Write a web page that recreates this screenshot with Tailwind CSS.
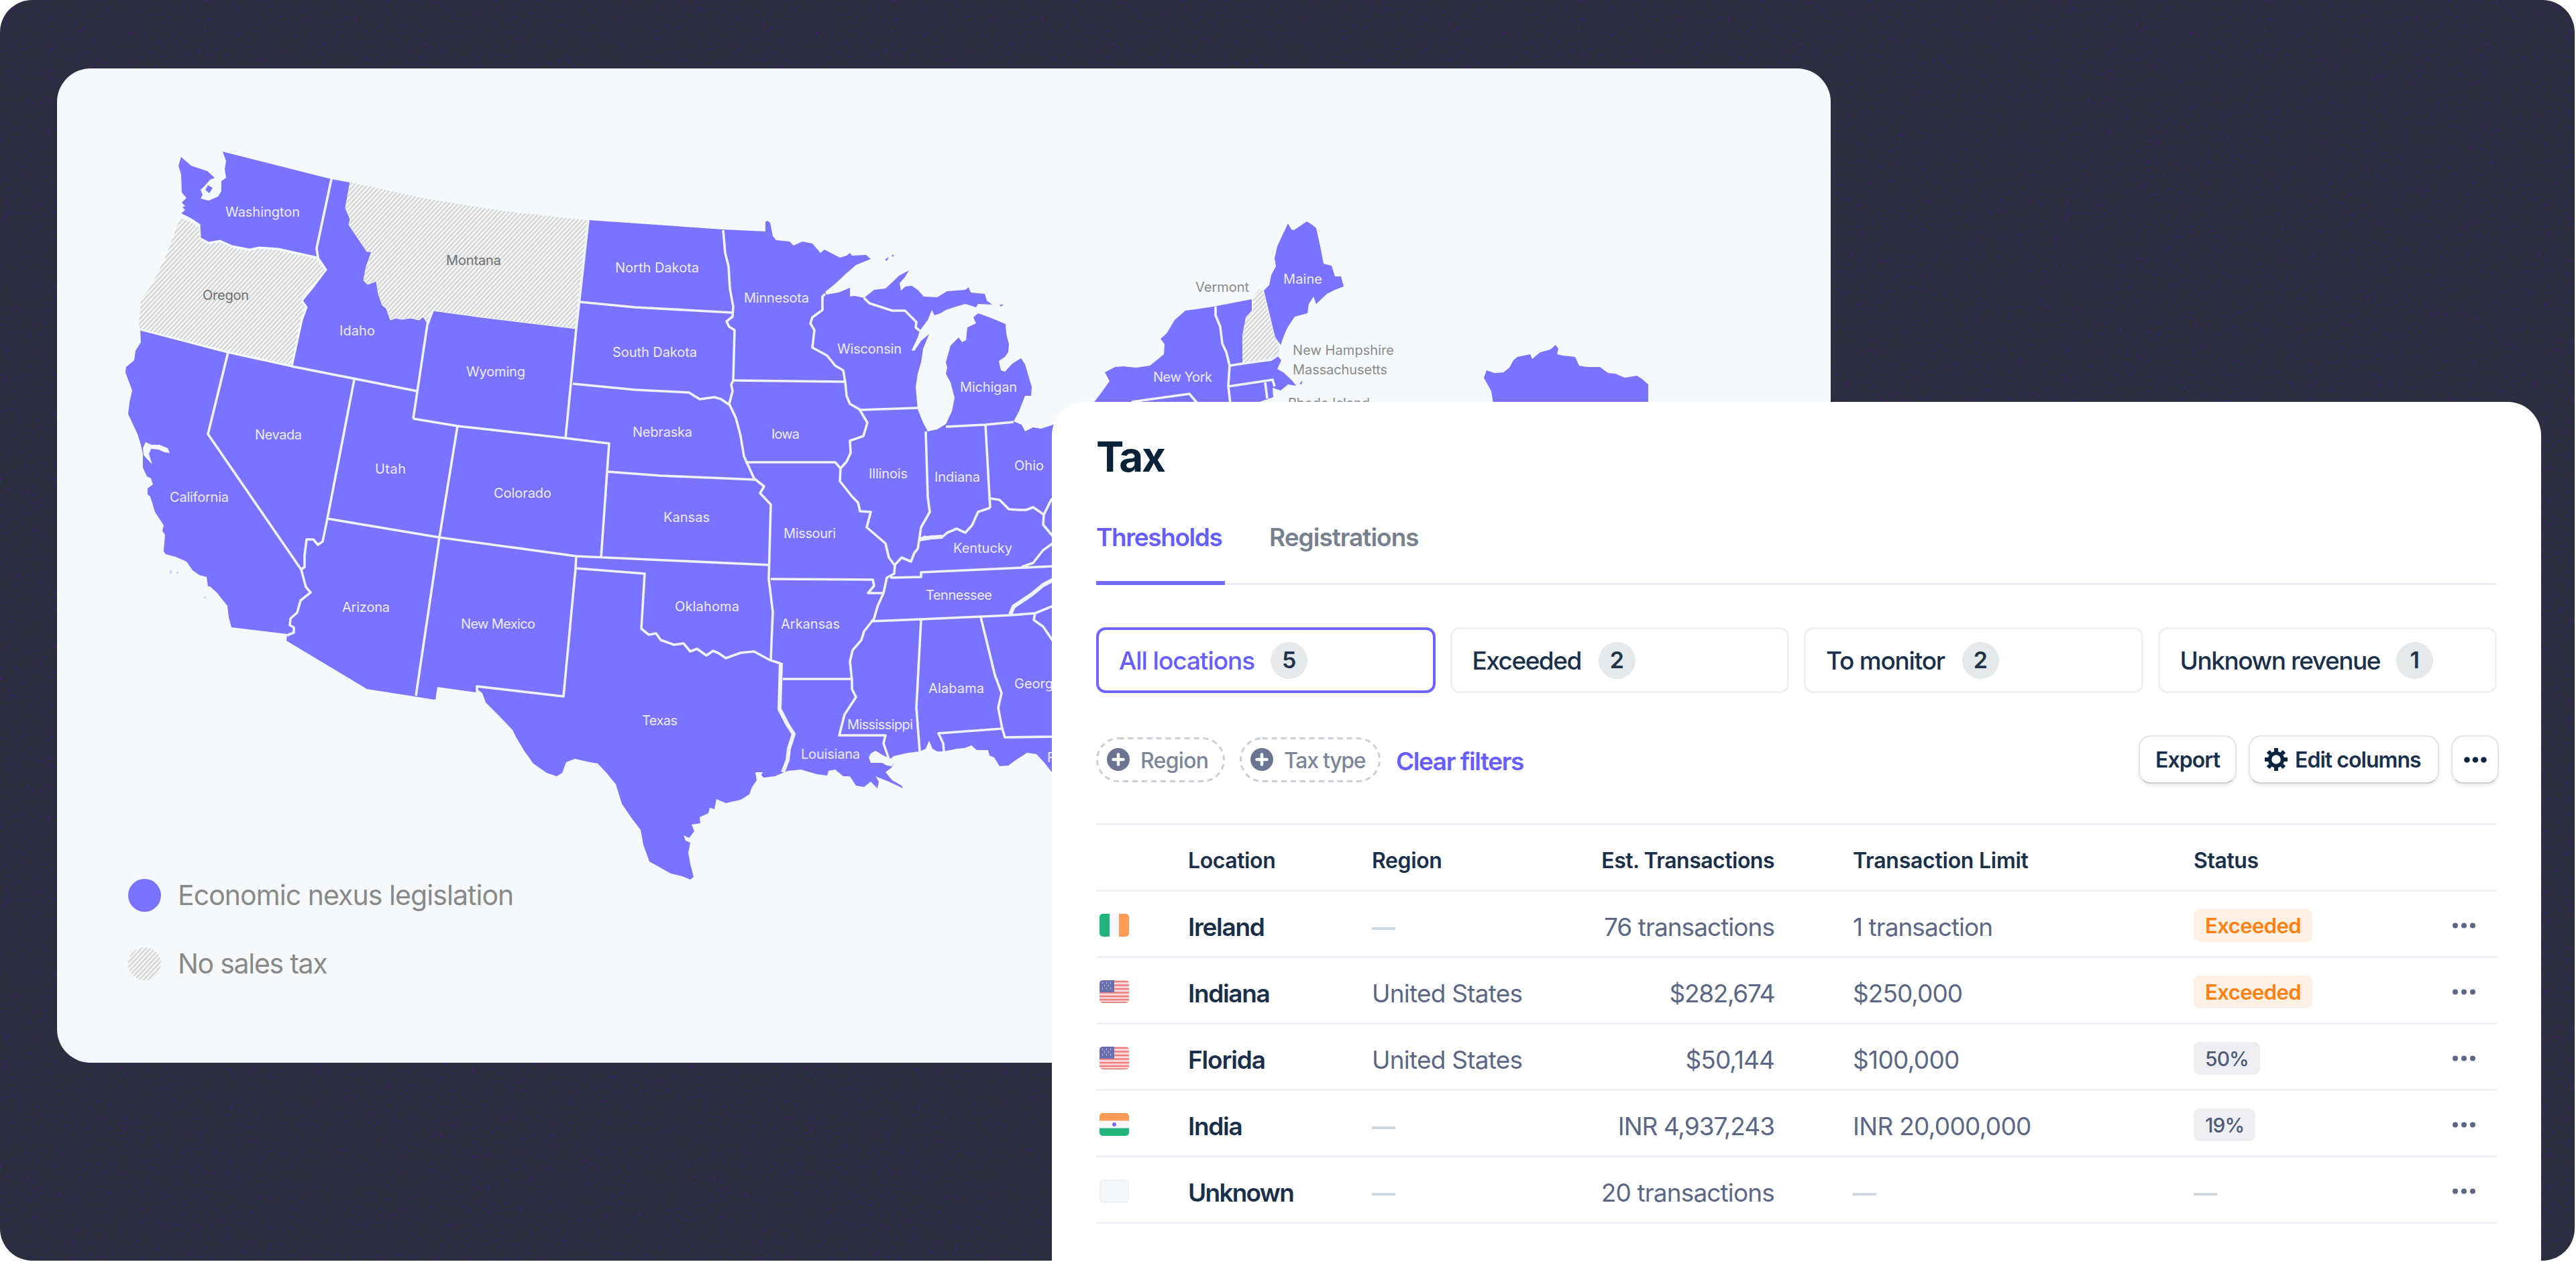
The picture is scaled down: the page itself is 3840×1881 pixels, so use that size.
<!DOCTYPE html>
<html lang="en">
<head>
    <meta charset="UTF-8">
    <meta name="viewport" content="width=device-width, initial-scale=1.0">
    <script src="https://cdn.jsdelivr.net/npm/@tailwindcss/browser@4"></script>
    <title>Tax thresholds</title>
</head>
<body class="bg-white font-['Inter',sans-serif]">

<div class="grid w-[3838px] h-[1879px] rounded-[48px] overflow-hidden bg-[#2a2e3e]">

  <!-- speckled background -->
  <svg class="col-start-1 row-start-1" width="3838" height="1879">
    <filter id="specks" x="0" y="0" width="100%" height="100%" color-interpolation-filters="sRGB">
      <feTurbulence type="fractalNoise" baseFrequency="0.25" numOctaves="2" seed="4"/>
      <feColorMatrix values="0 0 0 0 0.27  0 0 0 0 0.12  0 0 0 0 0.50  8 0 0 0 -5.1"/>
    </filter>
    <rect width="3838" height="1879" filter="url(#specks)" opacity="0.8"/>
  </svg>

  <!-- map card -->
  <div class="col-start-1 row-start-1 grid w-[2644px] h-[1482px] mt-[102px] ml-[85px] rounded-[50px] bg-[#f5f9fc] overflow-hidden relative">
    <svg class="col-start-1 row-start-1" width="2644" height="1482" viewBox="85 102 2644 1482">
      <defs>
        <pattern id="hatch" width="4.9" height="4.9" patternUnits="userSpaceOnUse" patternTransform="rotate(43)">
          <rect width="4.9" height="4.9" fill="#f2f4f5"/>
          <rect width="2" height="4.9" fill="#d2d3d3"/>
        </pattern>
      </defs>

      <!-- west, plains and south -->
      <path fill="#7a73ff" d="M332 226L494 267L522 272L524 330L560 385L700 410L855 410L877 328L1078 342L1141 345L1141 331L1144 329L1148 332L1152 352L1157 358L1177 360L1183 366L1196 360L1211 363L1223 377L1229 372L1252 384L1262 381L1267 377L1270 381L1291 380L1298 386L1276 395L1262 407L1245 423L1230 435L1232 439L1250 436L1267 429L1267 442L1274 441L1288 444L1303 432L1320 430L1333 418L1340 411L1355 403L1349 413L1341 422L1343 433L1350 427L1359 426L1368 432L1377 442L1397 443L1412 434L1439 432L1444 428L1447 436L1468 438L1471 448L1479 454L1458 453L1455 458L1439 453L1425 457L1410 462L1402 467L1393 470L1389 462L1383 477L1371 493L1368 503L1359 522L1363 523L1373 508L1385 498L1376 520L1373 540L1368 557L1365 577L1368 610L1376 630L1383 643L1397 640L1410 632L1419 613L1423 593L1417 570L1410 557L1412 548L1410 540L1417 515L1429 503L1434 510L1440 507L1442 488L1455 482L1451 473L1458 467L1475 473L1499 483L1500 497L1504 513L1503 525L1498 532L1489 538L1492 552L1498 554L1509 542L1522 534L1528 543L1538 577L1537 590L1528 590L1519 613L1511 628L1523 633L1528 643L1540 637L1552 639L1567 634L1584 628L1584 1166L1568 1151L1557 1137L1545 1124L1531 1122L1514 1133L1503 1141L1490 1142L1482 1129L1475 1126L1473 1118L1456 1118L1448 1111L1438 1115L1426 1116L1407 1120L1397 1120L1390 1116L1385 1104L1380 1116L1371 1120L1354 1122L1332 1127L1325 1133L1332 1139L1329 1144L1320 1151L1330 1163L1344 1171L1346 1175L1325 1165L1305 1157L1310 1165L1308 1175L1298 1165L1288 1173L1276 1171L1267 1157L1257 1157L1245 1147L1235 1149L1233 1156L1218 1154L1194 1147L1174 1149L1155 1157L1138 1159L1135 1155L1137 1151L1126 1151L1128 1163L1121 1173L1117 1184L1104 1192L1082 1197L1068 1191L1065 1206L1058 1204L1056 1212L1043 1218L1044 1227L1031 1229L1035 1239L1027 1249L1019 1245L1022 1253L1029 1256L1026 1271L1029 1288L1034 1307L1029 1311L1017 1306L1000 1302L968 1284L959 1259L955 1237L942 1220L927 1198L918 1169L905 1153L891 1138L879 1136L857 1131L844 1136L838 1152L830 1157L815 1152L795 1138L782 1120L770 1100L764 1088L745 1068L724 1047L719 1033L711 1027L710 1032L652 1024L649 1043L547 1027L427 955L428 945L345 935L341 920L339 903L323 883L313 874L310 874L308 860L297 857L287 850L278 837L262 830L247 826L244 822L246 797L242 791L244 783L231 763L224 740L220 737L220 728L228 722L225 713L219 710L213 697L213 677L210 663L205 647L191 617L193 600L197 582L187 555L188 547L200 537L202 523L210 510L209 491L222 480L300 380L276 332L269 319L276 313L272 309L276 307L271 302L278 295L271 287L270 260L266 247L270 234L285 247L309 255L320 265L313 268L306 276L299 283L302 290L299 296L311 299L318 296L325 293L330 285L330 270L337 265L335 252L337 240Z"/>
      <path fill="#7a73ff" d="M310 276L317 280L312 288L306 283ZM1319 387L1325 383L1322 389ZM1329 381L1333 379L1331 383ZM1490 454L1496 454L1492 457Z"/>
      <path fill="#d5d3ff" d="M253 850h3v5h-3zM263 852h3v3h-3zM304 889h3v3h-3z"/>
      <!-- bays and lakes cut out of the coast -->
      <path fill="#f5f9fc" d="M213 668L217 659L226 663L238 663L250 668L253 675L245 674L236 670L225 669L222 677L227 692L219 684L214 678ZM1295 1129L1298 1123L1305 1119L1317 1126L1327 1131L1332 1136L1330 1142L1322 1141L1315 1137L1298 1137Z"/>

      <!-- states without sales tax -->
      <path fill="#f5f9fc" stroke="#f5f9fc" stroke-width="3" d="M209 491L207 485L210 448L228 422L247 382L264 337L269 319L285 327L297 335L298 355L311 362L328 359L346 367L372 372L387 369L415 371L474 384L486 402L467 427L450 448L457 458L450 477L435 546L339 525Z"/>
      <path fill="url(#hatch)" d="M209 490L207 485L210 448L228 422L247 382L264 337L269 325L285 331L297 339L298 357L311 364L328 361L346 369L372 374L387 371L415 373L472 386L484 402L465 427L448 448L455 458L448 477L434 544L339 523Z"/>
      <path fill="url(#hatch)" stroke="#f5f9fc" stroke-width="1" d="M522 271L632 295L750 314L877 328L859 490L726 474L645 463L637 482L631 472L625 477L612 474L599 476L590 474L582 477L576 460L570 455L564 438L561 419L548 424L542 418L546 397L554 375L547 375L520 335L522 327L515 310Z"/>

      <!-- north east -->
      <path fill="#7a73ff" d="M1920 333L1925 342L1929 343L1948 330L1956 335L1962 340L1968 367L1973 393L1985 396L1990 412L1999 412L2003 427L1990 432L1978 438L1962 453L1958 442L1951 453L1949 467L1930 472L1920 487L1914 500L1909 514L1901 503L1884 433L1892 425L1895 410L1902 397L1900 385L1904 367Z"/>
      <path fill="#7a73ff" d="M1866 446L1809 457L1767 463L1751 477L1739 497L1730 505L1736 513L1735 528L1724 537L1714 545L1693 548L1675 546L1662 547L1647 555L1654 568L1642 585L1629 602L1870 602L1886 596L1898 592L1897 578L1909 582L1920 573L1932 575L1926 567L1913 555L1904 550L1910 537L1904 530L1895 538L1852 542L1852 500L1857 473L1866 463Z"/>
      <path fill="#7a73ff" d="M1937 572L1942 567L1940 573Z"/>
      <path fill="url(#hatch)" d="M1877 431L1883 433L1900 503L1907 518L1907 528L1895 537L1852 542L1853 493L1858 473L1868 463L1868 443Z"/>
      <!-- alaska -->
      <path fill="#7a73ff" d="M2226 602L2223 583L2212 563L2216 552L2228 556L2241 555L2250 548L2256 537L2262 532L2281 528L2284 535L2296 525L2311 521L2319 514L2323 520L2321 528L2330 530L2348 532L2354 545L2366 547L2385 547L2397 556L2408 557L2422 563L2440 560L2448 565L2457 573L2457 602Z"/>

      <!-- state borders -->
      <g fill="none" stroke="#eff3fe" stroke-width="3.600" stroke-linejoin="round">
        <path d="M494 267L472 370L474 384M435 546L622 583M645 463L637 484L616 624M859 490L843 653M340 525L310 647L449 849M528 566L488 773L481 807L474 812L467 804L457 804L454 828L454 845L449 849L456 875L463 883L448 895L443 913L433 922L432 932L438 935L438 943L428 947"/>
        <path d="M488 773L655 801L859 829L1145 842M616 624L682 635L843 653L908 661L905 703L896 831M682 635L655 801L620 1037M859 828L858 847L840 1038L711 1023L711 1032M858 847L961 855L956 937L967 946L978 944L985 954L1005 961L1019 959L1029 971L1039 967L1053 977L1063 970L1072 974L1082 981L1104 973L1124 971L1148 984L1164 989"/>
        <path d="M877 328L859 490M864 450L947 458L1092 466M854 572L947 581L1027 585L1043 595L1065 592L1075 595L1088 604M905 703L985 709L1128 715M1078 343L1081 377L1086 397L1088 430L1093 457L1092 472L1083 479L1087 487L1095 492L1093 567L1090 573L1092 583L1087 602L1097 623L1104 650L1109 680L1124 713L1139 725L1133 735L1149 752L1146 863L1152 912L1149 984"/>
        <path d="M1092 567L1258 569M1111 689L1245 689L1253 698M1230 438L1226 442L1226 462L1211 473L1208 482L1214 492L1211 518L1233 530L1245 545L1257 552L1260 570L1262 590L1267 602L1281 610L1293 630L1287 650L1267 657L1268 675L1262 688L1253 698L1252 717L1270 740L1279 749L1282 762L1298 763L1292 786L1320 810L1325 831L1334 843L1333 855L1322 861L1317 884L1308 904L1303 922L1288 941L1284 954L1271 969L1267 986L1270 1014L1270 1027L1276 1039L1259 1065L1251 1096L1320 1096L1317 1108L1325 1131"/>
        <path d="M1281 611L1368 608M1288 444L1296 452L1330 463L1349 463L1359 473L1366 480L1365 488L1371 493M1380 643L1383 741L1386 763L1373 786L1370 806L1368 818L1363 824L1358 837L1344 831L1333 843M1370 806L1378 800L1388 802L1405 800L1412 794L1426 788L1439 794L1449 783L1458 763L1476 757M1469 633L1475 740L1476 757M1410 636L1469 633L1511 629"/>
        <path d="M1477 743L1490 745L1504 759L1519 760L1530 760L1540 756L1556 767L1567 745L1580 735M1556 767L1555 782L1570 800M1572 808L1555 820L1540 839L1523 845M1327 861L1373 860L1373 853L1570 844M1149 863L1301 864L1303 873L1294 884L1316 884M1298 926L1373 923L1506 917L1543 914L1570 903M1373 924L1366 1055L1371 1120M1462 920L1483 1006L1493 1033L1488 1055L1494 1086L1498 1099L1570 1098M1494 1086L1399 1093L1406 1108L1407 1120M1543 914L1541 924L1555 934L1570 956M1167 1012L1270 1012"/>
        <path stroke-width="6" d="M1164 988L1162 1057L1174 1080L1183 1094L1176 1116L1174 1133L1167 1151M1506 916L1511 904L1538 886L1555 872L1570 864M1370 804L1388 801L1405 800"/>
        <path d="M1812 457L1812 470L1819 487L1822 512L1828 525L1833 545L1831 575L1834 602M1833 545L1852 542L1895 536L1904 530M1831 576L1897 566L1900 576M1886 570L1889 594M1687 599L1773 587L1784 600"/>
      </g>

      <g font-size="20" fill="#ecebff">
        <text x="336" y="323" textLength="111">Washington</text>
        <text x="506" y="500" textLength="53">Idaho</text>
        <text x="695" y="561" textLength="88">Wyoming</text>
        <text x="380" y="655" textLength="70">Nevada</text>
        <text x="559" y="706" textLength="46">Utah</text>
        <text x="736" y="742" textLength="86">Colorado</text>
        <text x="253" y="748" textLength="88">California</text>
        <text x="510" y="912" textLength="71">Arizona</text>
        <text x="687" y="937" textLength="111">New Mexico</text>
        <text x="917" y="406" textLength="125">North Dakota</text>
        <text x="913" y="532" textLength="126">South Dakota</text>
        <text x="1109" y="451" textLength="97">Minnesota</text>
        <text x="1248" y="527" textLength="96">Wisconsin</text>
        <text x="1431" y="584" textLength="85">Michigan</text>
        <text x="943" y="651" textLength="89">Nebraska</text>
        <text x="1150" y="654" textLength="42">Iowa</text>
        <text x="1295" y="713" textLength="58">Illinois</text>
        <text x="1393" y="718" textLength="68">Indiana</text>
        <text x="1512" y="701" textLength="44">Ohio</text>
        <text x="989" y="778" textLength="69">Kansas</text>
        <text x="1168" y="802" textLength="78">Missouri</text>
        <text x="1421" y="824" textLength="88">Kentucky</text>
        <text x="1006" y="911" textLength="96">Oklahoma</text>
        <text x="1380" y="894" textLength="99">Tennessee</text>
        <text x="1164" y="937" textLength="88">Arkansas</text>
        <text x="957" y="1081" textLength="53">Texas</text>
        <text x="1384" y="1033" textLength="83">Alabama</text>
        <text x="1512" y="1026" textLength="74">Georgia</text>
        <text x="1263" y="1087" textLength="98">Mississippi</text>
        <text x="1194" y="1131" textLength="88">Louisiana</text>
        <text x="1561" y="1136" textLength="68">Florida</text>
        <text x="1913" y="423" textLength="58">Maine</text>
        <text x="1719" y="569" textLength="88">New York</text>
      </g>
      <g font-size="20" fill="#707070">
        <text x="665" y="395" textLength="82">Montana</text>
        <text x="302" y="447" textLength="69">Oregon</text>
        <g fill="#8a8a8a">
          <text x="1782" y="435" textLength="80">Vermont</text>
          <text x="1927" y="529" textLength="151">New Hampshire</text>
          <text x="1927" y="558" textLength="141">Massachusetts</text>
          <text x="1920" y="608" textLength="122">Rhode Island</text>
        </g>
      </g>
    </svg>

    <!-- legend -->
    <div class="col-start-1 row-start-1 self-end flex flex-col gap-[53px] pl-[106px] pb-[123px] text-[41px] leading-none text-[#898989]">
      <div class="flex items-center gap-[25px] h-[49px]">
        <span class="size-[49px] rounded-full bg-[#7a73ff]"></span>
        <span class="tracking-[-0.023em]">Economic nexus legislation</span>
      </div>
      <div class="flex items-center gap-[25px] h-[49px]">
        <svg class="size-[49px]" viewBox="0 0 49 49"><circle cx="24.5" cy="24.5" r="24.5" fill="url(#hatch)"/></svg>
        <span class="tracking-[-0.031em]">No sales tax</span>
      </div>
    </div>
  </div>

  <!-- tax panel -->
  <div class="col-start-1 row-start-1 relative w-[2220px] mt-[599px] ml-[1568px] pt-[51px] pl-[66px] pr-[66px] rounded-t-[50px] bg-white text-[#1a2f4a] leading-none">
    <h1 class="text-[62px] leading-none font-bold tracking-[-0.04em] text-[#0a2238]">Tax</h1>

    <div class="flex gap-[66px] mt-[70px] h-[90px] border-b-[3px] border-[#ebeef3] text-[37px] font-semibold">
      <a class="h-[90px] w-[192px] border-b-[6px] border-[#7469ff] text-[#675dff] tracking-[-0.038em]">Thresholds</a>
      <a class="text-[#76808f] tracking-[-0.027em]">Registrations</a>
    </div>

    <div class="grid grid-cols-4 gap-[22px] mt-[63px] text-[37px] font-medium">
      <div class="flex items-center gap-[24px] h-[98px] pl-[30px] rounded-[14px] border-4 border-[#6e64ff] text-[#675dff]">
        <span class="tracking-[-0.028em]">All locations</span>
        <span class="grid place-items-center size-[55px] rounded-full bg-[#e4e9ec] text-[34px] font-semibold text-[#1f3448]">5</span>
      </div>
      <div class="flex items-center gap-[26px] h-[98px] pl-[30px] rounded-[14px] border-3 border-[#edf1f6]">
        <span class="tracking-[-0.041em]">Exceeded</span>
        <span class="grid place-items-center size-[55px] rounded-full bg-[#e4e9ec] text-[34px] font-semibold text-[#1f3448]">2</span>
      </div>
      <div class="flex items-center gap-[26px] h-[98px] pl-[30px] rounded-[14px] border-3 border-[#edf1f6]">
        <span class="tracking-[-0.033em]">To monitor</span>
        <span class="grid place-items-center size-[55px] rounded-full bg-[#e4e9ec] text-[34px] font-semibold text-[#1f3448]">2</span>
      </div>
      <div class="flex items-center gap-[24px] h-[98px] pl-[30px] rounded-[14px] border-3 border-[#edf1f6]">
        <span class="tracking-[-0.039em]">Unknown revenue</span>
        <span class="grid place-items-center size-[55px] rounded-full bg-[#e4e9ec] text-[34px] font-semibold text-[#1f3448]">1</span>
      </div>
    </div>

    <div class="flex items-center mt-[63px] h-[72px] -mr-[3px] text-[32px]">
      <div class="relative flex items-center gap-[16px] w-[192px] h-[67px] pl-[16px] text-[#7b8698] font-medium">
        <svg class="absolute inset-0" width="192" height="67"><rect x="1.5" y="1.5" width="189" height="64" rx="32" fill="none" stroke="#c9d0db" stroke-width="3" stroke-dasharray="8 6"/></svg>
        <svg width="34" height="34" viewBox="0 0 34 34"><circle cx="17" cy="17" r="17" fill="#6a7690"/><path d="M17 9.500v15M9.500 17h15" stroke="#fff" stroke-width="4.500" stroke-linecap="round"/></svg>
        <span class="pt-[3px] tracking-[-0.022em]">Region</span>
      </div>
      <div class="relative flex items-center gap-[16px] w-[210px] h-[67px] ml-[22px] pl-[16px] text-[#7b8698] font-medium">
        <svg class="absolute inset-0" width="210" height="67"><rect x="1.5" y="1.5" width="207" height="64" rx="32" fill="none" stroke="#c9d0db" stroke-width="3" stroke-dasharray="8 6"/></svg>
        <svg width="34" height="34" viewBox="0 0 34 34"><circle cx="17" cy="17" r="17" fill="#6a7690"/><path d="M17 9.500v15M9.500 17h15" stroke="#fff" stroke-width="4.500" stroke-linecap="round"/></svg>
        <span class="pt-[3px] tracking-[-0.04em]">Tax type</span>
      </div>
      <a class="ml-[23px] pt-[5px] text-[37px] font-semibold tracking-[-0.039em] text-[#675dff]">Clear filters</a>

      <div class="flex gap-[18px] ml-auto font-semibold">
        <button class="w-[146px] h-[72px] rounded-[18px] border-2 border-[#e3e5e8] border-b-[#c9cbce] shadow-[0_3px_5px_rgba(0,0,0,0.08)] tracking-[-0.029em] pt-[2px]">Export</button>
        <button class="flex items-center gap-[11px] w-[284px] h-[72px] pl-[22px] rounded-[18px] border-2 border-[#e3e5e8] border-b-[#c9cbce] shadow-[0_3px_5px_rgba(0,0,0,0.08)]">
          <svg width="34" height="34" viewBox="-17 -17 34 34">
            <circle r="9.500" fill="none" stroke="#0a2540" stroke-width="5.500"/>
            <path d="M0-17V-11M0 17V11M-17 0H-11M17 0H11M-12-12L-8.500-8.500M12 12L8.500 8.500M-12 12L-8.500 8.500M12-12L8.500-8.500" stroke="#0a2540" stroke-width="6"/>
          </svg>
          <span class="pt-[2px] tracking-[-0.03em]">Edit columns</span>
        </button>
        <button class="grid place-items-center w-[71px] h-[72px] rounded-[18px] border-2 border-[#e3e5e8] border-b-[#c9cbce] shadow-[0_3px_5px_rgba(0,0,0,0.08)]">
          <svg width="34" height="9" viewBox="0 0 34 9" fill="#0a2540"><circle cx="4.500" cy="4.500" r="4.300"/><circle cx="17" cy="4.500" r="4.300"/><circle cx="29.500" cy="4.500" r="4.300"/></svg>
        </button>
      </div>
    </div>

    <div class="mt-[59px] border-t-[3px] border-[#eef2f7] text-[37px] text-[#5b6784]">
      <div class="grid grid-cols-[137px_274px_300px_300px_625px_1fr] items-center h-[99px] pt-[10px] border-b-[3px] border-[#f0f2f7] text-[32px] font-semibold text-[#1a2f4a]">
        <span></span>
        <span class="tracking-[-0.013em]">Location</span>
        <span class="tracking-[-0.012em]">Region</span>
        <span class="text-right tracking-[-0.016em]">Est. Transactions</span>
        <span class="pl-[117px] tracking-[-0.008em]">Transaction Limit</span>
        <span class="tracking-[-0.013em]">Status</span>
      </div>

      <div class="grid grid-cols-[137px_274px_300px_300px_625px_1fr] items-center h-[99px] pt-[4px] border-b-[3px] border-[#f0f2f7]">
        <svg class="ml-[5px]" width="44" height="34" viewBox="0 0 44 34">
          <rect width="44" height="34" rx="5" fill="#f4f6fa"/>
          <path d="M15 0H5a5 5 0 0 0-5 5V29a5 5 0 0 0 5 5H15Z" fill="#23b47e"/><path d="M29 0H39a5 5 0 0 1 5 5V29a5 5 0 0 1-5 5H29Z" fill="#fb9b56"/>
        </svg>
        <span class="pt-[4px] font-semibold text-[#1a2f4a] tracking-[-0.035em]">Ireland</span>
        <span class="mt-[10px] w-[35px] h-[4px] bg-[#cfd6df]"></span>
        <span class="pt-[4px] text-right tracking-[-0.026em]">76 transactions</span>
        <span class="pt-[4px] pl-[117px] tracking-[-0.026em]">1 transaction</span>
        <div class="flex items-center justify-between pr-[32px]">
          <span class="flex items-center h-[49px] px-[17px] pt-[1px] rounded-[9px] bg-[#fff0e4] text-[31px] font-semibold tracking-[-0.018em] text-[#ff7f11]">Exceeded</span>
          <svg width="34" height="9" viewBox="0 0 34 9" fill="#5b6784"><circle cx="4" cy="4.500" r="4"/><circle cx="17" cy="4.500" r="4"/><circle cx="30" cy="4.500" r="4"/></svg>
        </div>
      </div>

      <div class="grid grid-cols-[137px_274px_300px_300px_625px_1fr] items-center h-[99px] pt-[4px] border-b-[3px] border-[#f0f2f7]">
        <svg class="ml-[5px]" width="44" height="34" viewBox="0 0 44 34">
          <clipPath id="flag"><rect width="44" height="34" rx="5"/></clipPath>
          <g clip-path="url(#flag)"><rect width="44" height="34" fill="#f9dcdc"/><path d="M0 2H44M0 7.500H44M0 13H44M0 18.500H44M0 24H44M0 29H44M0 33.500H44" stroke="#ee7f7f" stroke-width="2.600"/><rect width="22" height="18" fill="#6b6fae"/><path d="M4 4h1M10 4h1M16 4h1M7 8h1M13 8h1M4 12h1M10 12h1M16 12h1" stroke="#c6c8e4" stroke-width="2.500"/></g>
        </svg>
        <span class="pt-[4px] font-semibold text-[#1a2f4a] tracking-[-0.036em]">Indiana</span>
        <span class="pt-[4px] tracking-[-0.021em]">United States</span>
        <span class="pt-[4px] text-right tracking-[-0.036em]">$282,674</span>
        <span class="pt-[4px] pl-[117px] tracking-[-0.026em]">$250,000</span>
        <div class="flex items-center justify-between pr-[32px]">
          <span class="flex items-center h-[49px] px-[17px] pt-[1px] rounded-[9px] bg-[#fff0e4] text-[31px] font-semibold tracking-[-0.018em] text-[#ff7f11]">Exceeded</span>
          <svg width="34" height="9" viewBox="0 0 34 9" fill="#5b6784"><circle cx="4" cy="4.500" r="4"/><circle cx="17" cy="4.500" r="4"/><circle cx="30" cy="4.500" r="4"/></svg>
        </div>
      </div>

      <div class="grid grid-cols-[137px_274px_300px_300px_625px_1fr] items-center h-[99px] pt-[4px] border-b-[3px] border-[#f0f2f7]">
        <svg class="ml-[5px]" width="44" height="34" viewBox="0 0 44 34">
          <g clip-path="url(#flag)"><rect width="44" height="34" fill="#f9dcdc"/><path d="M0 2H44M0 7.500H44M0 13H44M0 18.500H44M0 24H44M0 29H44M0 33.500H44" stroke="#ee7f7f" stroke-width="2.600"/><rect width="22" height="18" fill="#6b6fae"/><path d="M4 4h1M10 4h1M16 4h1M7 8h1M13 8h1M4 12h1M10 12h1M16 12h1" stroke="#c6c8e4" stroke-width="2.500"/></g>
        </svg>
        <span class="pt-[4px] font-semibold text-[#1a2f4a] tracking-[-0.032em]">Florida</span>
        <span class="pt-[4px] tracking-[-0.021em]">United States</span>
        <span class="pt-[4px] text-right tracking-[-0.025em]">$50,144</span>
        <span class="pt-[4px] pl-[117px] tracking-[-0.019em]">$100,000</span>
        <div class="flex items-center justify-between pr-[32px]">
          <span class="flex items-center h-[49px] px-[17px] pt-[1px] rounded-[9px] bg-[#eceef1] text-[30px] font-medium tracking-[-0.03em] text-[#4f5b76]">50%</span>
          <svg width="34" height="9" viewBox="0 0 34 9" fill="#5b6784"><circle cx="4" cy="4.500" r="4"/><circle cx="17" cy="4.500" r="4"/><circle cx="30" cy="4.500" r="4"/></svg>
        </div>
      </div>

      <div class="grid grid-cols-[137px_274px_300px_300px_625px_1fr] items-center h-[99px] pt-[4px] border-b-[3px] border-[#f0f2f7]">
        <svg class="ml-[5px]" width="44" height="34" viewBox="0 0 44 34">
          <g clip-path="url(#flag)"><rect width="44" height="34" fill="#f4f6fa"/><rect width="44" height="11.500" fill="#fb9b56"/><rect y="22.500" width="44" height="11.500" fill="#23b47e"/><circle cx="22" cy="17" r="3" fill="#7a6cf5"/></g>
        </svg>
        <span class="pt-[4px] font-semibold text-[#1a2f4a] tracking-[-0.035em]">India</span>
        <span class="mt-[10px] w-[35px] h-[4px] bg-[#cfd6df]"></span>
        <span class="pt-[4px] text-right tracking-[-0.028em]">INR 4,937,243</span>
        <span class="pt-[4px] pl-[117px] tracking-[-0.019em]">INR 20,000,000</span>
        <div class="flex items-center justify-between pr-[32px]">
          <span class="flex items-center h-[49px] px-[17px] pt-[1px] rounded-[9px] bg-[#eceef1] text-[30px] font-medium tracking-[-0.03em] text-[#4f5b76]">19%</span>
          <svg width="34" height="9" viewBox="0 0 34 9" fill="#5b6784"><circle cx="4" cy="4.500" r="4"/><circle cx="17" cy="4.500" r="4"/><circle cx="30" cy="4.500" r="4"/></svg>
        </div>
      </div>

      <div class="grid grid-cols-[137px_274px_300px_300px_625px_1fr] items-center h-[99px] pt-[4px] border-b-[3px] border-[#f0f2f7]">
        <span class="ml-[5px] w-[44px] h-[35px] rounded-[6px] border-2 border-[#edf0f5] bg-[#f5f8fb]"></span>
        <span class="pt-[4px] font-semibold text-[#1a2f4a] tracking-[-0.047em]">Unknown</span>
        <span class="mt-[10px] w-[35px] h-[4px] bg-[#cfd6df]"></span>
        <span class="pt-[4px] text-right tracking-[-0.023em]">20 transactions</span>
        <span class="mt-[10px] ml-[117px] w-[35px] h-[4px] bg-[#cfd6df]"></span>
        <div class="flex items-center justify-between pr-[32px]">
          <span class="mt-[10px] w-[35px] h-[4px] bg-[#cfd6df]"></span>
          <svg width="34" height="9" viewBox="0 0 34 9" fill="#5b6784"><circle cx="4" cy="4.500" r="4"/><circle cx="17" cy="4.500" r="4"/><circle cx="30" cy="4.500" r="4"/></svg>
        </div>
      </div>
    </div>
  </div>
</div>
</body>
</html>
